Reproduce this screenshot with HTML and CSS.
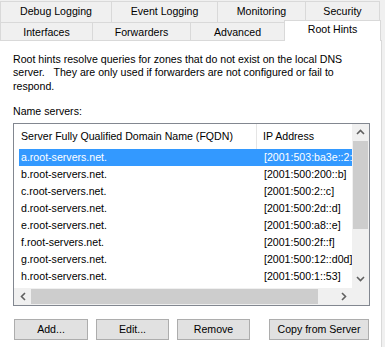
FILE: index.html
```html
<!DOCTYPE html>
<html>
<head>
<meta charset="utf-8">
<link rel="stylesheet" href="styles.css">
</head>
<body>
<div class="tabs">
  <div class="row row1">
    <div class="tab w-debug">Debug Logging</div>
    <div class="tab w-event">Event Logging</div>
    <div class="tab w-mon">Monitoring</div>
    <div class="tab w-sec">Security</div>
  </div>
  <div class="row row2">
    <div class="tab w-int">Interfaces</div>
    <div class="tab w-fwd">Forwarders</div>
    <div class="tab w-adv">Advanced</div>
    <div class="tab w-root active">Root Hints</div>
  </div>
</div>
<div class="panel">
  <p class="desc">Root hints resolve queries for zones that do not exist on the local DNS<br>server.&nbsp;&nbsp; They are only used if forwarders are not configured or fail to<br>respond.</p>
  <p class="label">Name servers:</p>
  <div class="listbox">
    <div class="listarea">
      <div class="header">
        <div class="hcell c1">Server Fully Qualified Domain Name (FQDN)</div>
        <div class="hcell c2">IP Address</div>
      </div>
      <div class="rows">
        <div class="item selected"><span class="cell c1">a.root-servers.net.</span><span class="cell c2">[2001:503:ba3e::2:30]</span></div>
        <div class="item"><span class="cell c1">b.root-servers.net.</span><span class="cell c2">[2001:500:200::b]</span></div>
        <div class="item"><span class="cell c1">c.root-servers.net.</span><span class="cell c2">[2001:500:2::c]</span></div>
        <div class="item"><span class="cell c1">d.root-servers.net.</span><span class="cell c2">[2001:500:2d::d]</span></div>
        <div class="item"><span class="cell c1">e.root-servers.net.</span><span class="cell c2">[2001:500:a8::e]</span></div>
        <div class="item"><span class="cell c1">f.root-servers.net.</span><span class="cell c2">[2001:500:2f::f]</span></div>
        <div class="item"><span class="cell c1">g.root-servers.net.</span><span class="cell c2">[2001:500:12::d0d]</span></div>
        <div class="item"><span class="cell c1">h.root-servers.net.</span><span class="cell c2">[2001:500:1::53]</span></div>
      </div>
    </div>
    <div class="vscroll">
      <div class="sbtn"><svg width="9" height="6" viewBox="0 0 9 6"><path d="M1 5 L4.5 1.5 L8 5" fill="none" stroke="#606060" stroke-width="1.6"/></svg></div>
      <div class="vthumb"></div>
      <div class="vtrack"></div>
      <div class="sbtn"><svg width="9" height="6" viewBox="0 0 9 6"><path d="M1 1 L4.5 4.5 L8 1" fill="none" stroke="#606060" stroke-width="1.6"/></svg></div>
    </div>
    <div class="hscroll">
      <div class="sbtn"><svg width="6" height="9" viewBox="0 0 6 9"><path d="M5 1 L1.5 4.5 L5 8" fill="none" stroke="#606060" stroke-width="1.6"/></svg></div>
      <div class="hthumb"></div>
      <div class="htrack"></div>
      <div class="sbtn"><svg width="6" height="9" viewBox="0 0 6 9"><path d="M1 1 L4.5 4.5 L1 8" fill="none" stroke="#606060" stroke-width="1.6"/></svg></div>
    </div>
    <div class="corner"></div>
  </div>
  <div class="buttons">
    <button class="btn b-add">Add...</button>
    <button class="btn b-edit">Edit...</button>
    <button class="btn b-remove">Remove</button>
    <button class="btn b-copy">Copy from Server</button>
  </div>
</div>
</body>
</html>
```
FILE: styles.css
```css
* { box-sizing: border-box; }
html, body { margin: 0; padding: 0; }
body {
  width: 385px;
  height: 347px;
  overflow: hidden;
  background: #f0f0f0;
  font-family: "Liberation Sans", Arial, sans-serif;
  font-size: 10.6px;
  color: #000;
}
.tabs { width: 385px; }
.row { display: flex; }
.row1 { margin-top: 1px; height: 21px; }
.row2 { height: 18px; align-items: flex-start; }
.tab {
  border: 1px solid #d9d9d9;
  border-bottom: none;
  background: #f0f0f0;
  text-align: center;
  white-space: nowrap;
  flex: none;
}
.tab + .tab { margin-left: -1px; }
.row1 .tab { height: 21px; line-height: 19px; }
.row2 .tab { height: 18px; line-height: 18px; }
.w-debug { width: 112px; }
.w-event { width: 107px; }
.w-mon { width: 89px; }
.w-sec { width: 75px; }
.w-int { width: 93px; }
.w-fwd { width: 99px; }
.w-adv { width: 95px; }
.w-root { width: 97px; }
.row2 .tab.active {
  position: relative;
  z-index: 1;
  margin-top: -2px;
  height: 21px;
  line-height: 17px;
  background: #fff;
}
.panel {
  width: 382px;
  height: 307px;
  background: #fff;
  border-top: 1px solid #d9d9d9;
  border-right: 1px solid #d9d9d9;
  padding: 12px 0 0 13px;
}
.desc {
  margin: 0;
  line-height: 13.3px;
  white-space: nowrap;
}
.label {
  margin: 12px 0 0 0;
  line-height: 13px;
}
.listbox {
  margin-top: 5px;
  width: 357px;
  height: 183px;
  border: 1px solid #828790;
  display: grid;
  grid-template-columns: 338px 17px;
  grid-template-rows: 164px 17px;
}
.listarea {
  overflow: hidden;
  background: #fff;
}
.header {
  display: flex;
  height: 25px;
  white-space: nowrap;
}
.hcell { line-height: 25px; flex: none; overflow: hidden; }
.header .c1 { width: 243px; padding-left: 7px; border-right: 1px solid #e5e5e5; }
.header .c2 { padding-left: 6px; width: 120px; }
.rows { padding-left: 5px; }
.item {
  display: flex;
  height: 17px;
  line-height: 17px;
  white-space: nowrap;
  width: 420px;
}
.item .c1 { width: 238px; padding-left: 2px; flex: none; }
.item .c2 { padding-left: 7px; flex: none; }
.item.selected { background: #3399ff; color: #fff; }
.vscroll {
  display: flex;
  flex-direction: column;
  background: #f0f0f0;
}
.sbtn {
  width: 17px;
  height: 17px;
  flex: none;
  display: flex;
  align-items: center;
  justify-content: center;
  background: #f0f0f0;
}
.vthumb { height: 88px; margin: 0 1px; background: #cdcdcd; flex: none; }
.vtrack { flex: 1; }
.hscroll {
  display: flex;
  background: #f0f0f0;
}
.hthumb { width: 287px; margin: 1px 0; background: #cdcdcd; flex: none; }
.htrack { flex: 1; }
.corner { background: #f0f0f0; }
.buttons {
  display: flex;
  margin-top: 13px;
  margin-left: 1px;
}
.btn {
  height: 21px;
  padding: 0;
  border: 1px solid #adadad;
  background: #e1e1e1;
  font-family: "Liberation Sans", Arial, sans-serif;
  font-size: 10.6px;
  color: #000;
  flex: none;
}
.b-add { width: 74px; }
.b-edit { width: 73px; margin-left: 8px; }
.b-remove { width: 73px; margin-left: 8px; }
.b-copy { width: 100px; margin-left: 19px; }
```
